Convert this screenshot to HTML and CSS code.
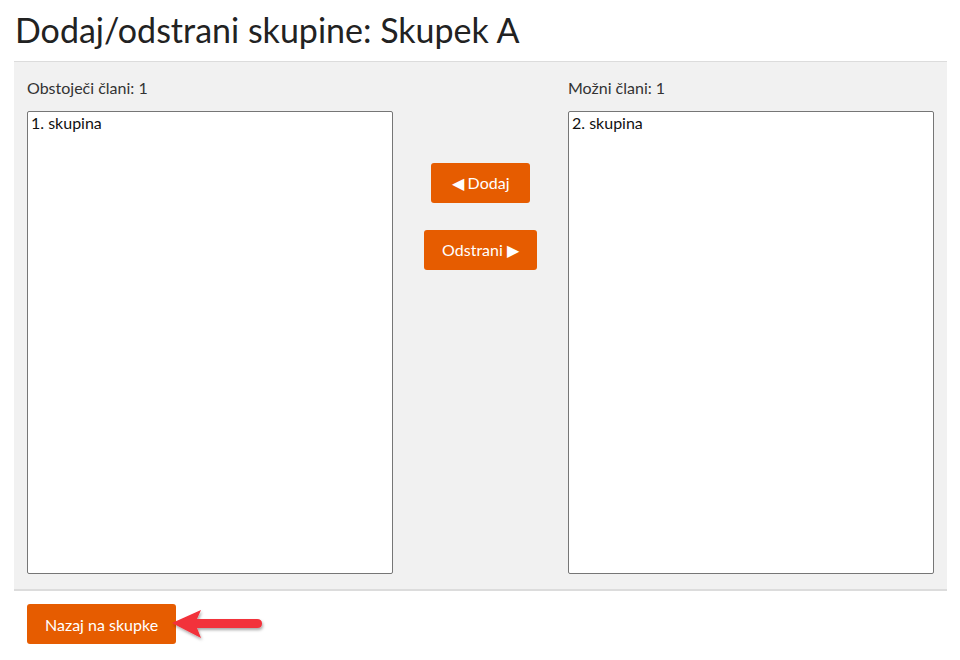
FILE: index.html
```html
<!DOCTYPE html>
<html>
   <head>
      <meta charset="utf-8">
      <link rel="stylesheet" href="styles.css">
   </head>
   <body>
      <h1>Dodaj/odstrani skupine: Skupek A</h1>

      <div class="panel">
         <div class="column">
            <label>Obstoječi člani: 1</label>
            <div class="listbox">
               <div class="option">1. skupina</div>
            </div>
         </div>

         <div class="actions">
            <button class="btn add">&#9664; Dodaj</button>
            <button class="btn">Odstrani &#9654;</button>
         </div>

         <div class="column">
            <label>Možni člani: 1</label>
            <div class="listbox">
               <div class="option">2. skupina</div>
            </div>
         </div>
      </div>

      <div class="footer">
         <button class="btn">Nazaj na skupke</button>
         <!-- callout arrow pointing at the back button -->
         <svg class="callout" width="100" height="40" viewBox="0 0 100 40">
            <defs>
               <filter id="shadow" x="-20%" y="-30%" width="140%" height="170%">
                  <feDropShadow dx="1" dy="2" stdDeviation="1.5" flood-color="#000" flood-opacity="0.35" />
               </filter>
            </defs>
            <g filter="url(#shadow)">
               <path d="M2,17 L31,4 L27,13 L87,13 Q92,13 92,17.5 Q92,22 87,22 L27,22 L31,32 Z" fill="#f2303a" />
            </g>
         </svg>
      </div>
   </body>
</html>
```

FILE: styles.css
```css
body {
   margin : 0px;
   padding : 0px 13px 0px 14px;
   font-family : Lato, "Noto Sans", sans-serif;
   color : #222;
   background-color : #fff;
}

h1 {
   font-size : 34px;
   font-weight : 400;
   margin : 0px;
   padding : 12px 0px 0px 1px;
   height : 49px;
   line-height : 36px;
}

.panel {
   display : flex;
   background-color : #f1f1f1;
   border-top : 1px solid #dcdcdc;
   border-bottom : 2px solid #dcdcdc;
   padding : 15px 13px 15px 13px;
}

.column {
   display : flex;
   flex-direction : column;
   width : 366px;
}

label {
   font-size : 16px;
   line-height : 22px;
   color : #333;
   margin-bottom : 12px;
}

.listbox {
   box-sizing : border-box;
   height : 463px;
   background-color : #fff;
   border : 1px solid #767676;
   border-radius : 2px;
   padding : 1px 3px;
}

.option {
   font-size : 16px;
   line-height : 20px;
   color : #111;
}

.actions {
   flex : 1;
   display : flex;
   flex-direction : column;
   align-items : center;
   gap : 27px;
   padding-top : 86px;
}

.btn {
   font-family : Lato, "Noto Sans", sans-serif;
   font-size : 16px;
   color : #fff;
   background-color : #e65c00;
   border : none;
   border-radius : 3px;
   height : 40px;
   padding : 0px 18px;
   cursor : pointer;
}

.btn.add {
   padding : 0px 21px;
}

.footer {
   position : relative;
   padding : 13px 0px 0px 13px;
}

.callout {
   position : absolute;
   left : 156px;
   top : 15px;
}
```
